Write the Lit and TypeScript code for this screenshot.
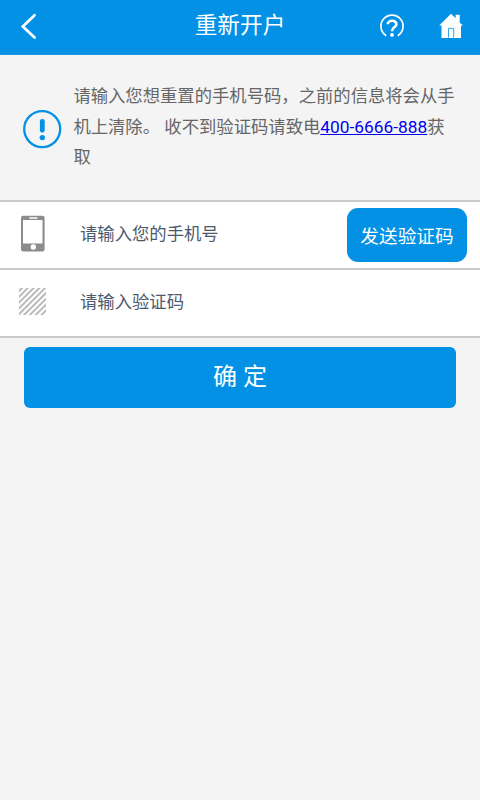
import { LitElement, html, css } from "lit";
import { customElement } from "lit/decorators.js";

@customElement("app-root")
export class AppRoot extends LitElement {
  static styles = css`
    :host {
      display: flex;
      flex-direction: column;
      height: 800px;
      background: #f4f4f4;
      font-family: Roboto, "Noto Sans CJK SC", sans-serif;
      font-size: 17.33px;
    }
    * { box-sizing: border-box; }
    svg { display: block; flex: none; }
    header {
      display: grid;
      grid-template-columns: 120px 1fr 120px;
      height: 55px;
      flex: none;
      background: #0391e5;
      border-bottom: 1px solid #1b9ae6;
      color: #fff;
    }
    h1 {
      margin: 0;
      text-align: center;
      font-size: 22.67px;
      font-weight: 400;
      line-height: 52px;
    }
    .notice {
      display: flex;
      height: 145px;
      flex: none;
      padding: 26px 20px 0 22px;
      color: #666;
    }
    .notice svg { margin: 28px 11.4px 0 0; }
    .notice p { margin: 0; width: 386px; line-height: 30.6px; }
    a { color: #0000ee; text-decoration: underline; }
    .row {
      display: flex;
      height: 68px;
      flex: none;
      background: #fff;
      border-top: 2px solid #c9c9c9;
    }
    .row.last { height: 70px; border-bottom: 2px solid #c9c9c9; }
    .label { flex: 1; line-height: 64px; color: #4b5a6e; }
    button {
      border: 0;
      padding: 0;
      background: #0391e5;
      color: #fff;
      font-family: inherit;
    }
    .send {
      width: 120px;
      height: 54px;
      margin: 6px 13px 0 0;
      padding-top: 2px;
      border-radius: 11px;
      font-size: 18.67px;
      line-height: 54px;
    }
    .confirm {
      width: 432px;
      height: 61px;
      margin: 9px 24px 0;
      padding-bottom: 2px;
      border-radius: 6px;
      font-size: 24px;
      line-height: 58px;
      flex: none;
    }
  `;

  render() {
    return html`
      <header>
        <svg width="120" height="54" viewBox="0 0 120 54" fill="none" stroke="#fff" stroke-width="2.7" stroke-linecap="round">
          <path d="M34.6 15.2 22.8 26.4 34.6 37.6" />
        </svg>
        <h1>重新开户</h1>
        <svg width="120" height="54" viewBox="0 0 120 54" fill="none" stroke="#fff">
          <path d="M26.2 35.7A11.1 11.1 0 1 1 37.8 35.7" stroke-width="1.7" />
          <path d="M27.8 24.3C27.8 19.7 36.4 19.5 36.4 24.2C36.4 27.2 32 27 32 31.2" stroke-width="2.6" />
          <circle cx="32" cy="34.9" r="1.9" fill="#fff" stroke="none" />
          <path d="M91 13.7 79.2 25.6H81.5V38H101V25.6H103L99.7 22.4V14.8H95.6V18.2Z" fill="#fff" stroke="none" />
          <path d="M88.5 37.7V28.4H93.7V37.7" stroke="#0391e5" stroke-width="0.8" />
        </svg>
      </header>
      <section class="notice">
        <svg width="40" height="40" viewBox="0 0 40 40" fill="none" stroke="#0391e5">
          <circle cx="20.2" cy="20.1" r="18" stroke-width="2.3" />
          <path d="M20.3 12.3V21.3" stroke-width="4.8" stroke-linecap="round" />
          <circle cx="20.3" cy="28.6" r="2.7" fill="#0391e5" stroke="none" />
        </svg>
        <p>请输入您想重置的手机号码，之前的信息将会从手机上清除。 收不到验证码请致电<a href="#">400-6666-888</a>获取</p>
      </section>
      <div class="row">
        <svg width="80" height="64" viewBox="0 0 80 64">
          <path fill="#8c8c8c" fill-rule="evenodd" d="M23.3 13.8H42.3Q44.6 13.8 44.6 16V47.2Q44.6 49.4 42.3 49.4H23.3Q21 49.4 21 47.2V16Q21 13.8 23.3 13.8ZM23 18V41.5H42.5V18ZM29.5 15.2Q28.5 15.8 29.5 16.8H37.2Q38.2 15.8 37.2 15.2ZM33.3 42.3A2.7 2.7 0 1 0 33.3 47.7A2.7 2.7 0 1 0 33.3 42.3Z" />
        </svg>
        <span class="label">请输入您的手机号</span>
        <button class="send">发送验证码</button>
      </div>
      <div class="row last">
        <svg width="80" height="64" viewBox="0 0 80 64">
          <defs><clipPath id="box"><rect x="19" y="18" width="27" height="27" /></clipPath></defs>
          <path clip-path="url(#box)" stroke="#bbb" stroke-width="2" d="M15 25 31 9M15 30.8 37 8.8M15 36.6 43 8.6M15 42.4 49 8.4M15 48.2 51 12.2M15 54 51 18M15 59.8 51 23.8M15 65.6 51 29.6M15 71.4 51 35.4" />
        </svg>
        <span class="label">请输入验证码</span>
      </div>
      <button class="confirm">确 定</button>
    `;
  }
}
